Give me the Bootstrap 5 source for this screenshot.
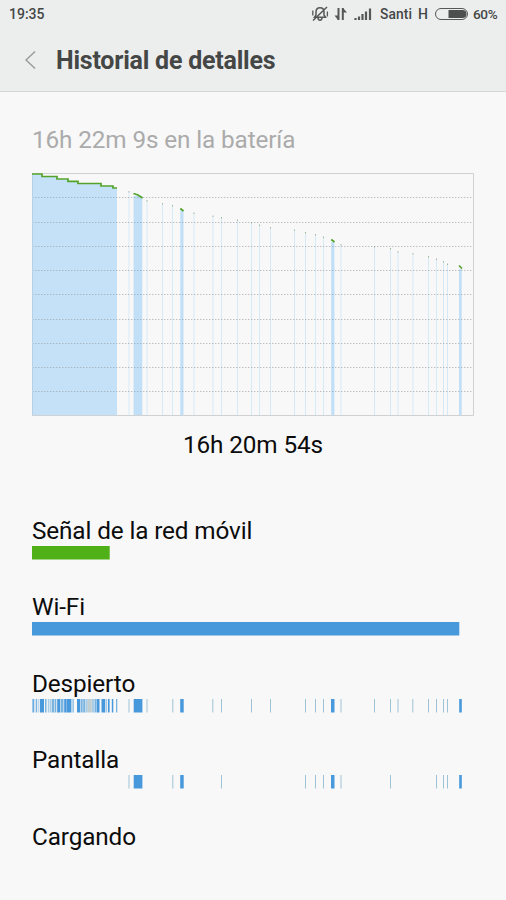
<!DOCTYPE html>
<html lang="es">
<head>
<meta charset="utf-8">
<meta name="viewport" content="width=device-width, initial-scale=1">
<title>Historial de detalles</title>
<link rel="stylesheet" href="https://cdn.jsdelivr.net/npm/bootstrap@5.3.0/dist/css/bootstrap.min.css">
<style>
body{font-family:Roboto,"Liberation Sans",sans-serif;background:#f8f8f8;color:#0c0c0c;overflow:hidden}
svg{display:block;flex:none}
.top-area{height:92px;background:#eceeee;border-bottom:1px solid #d5d7d7;color:#444746}
.status-row{height:28px;padding:0 9px;font-size:14px;font-weight:500;line-height:28px}
.status-row span{white-space:nowrap}
.carrier-name{width:38px;font-size:13.8px;letter-spacing:.1px}
.net-type{width:17px}
.battery-pct{width:24px;font-size:13.6px;letter-spacing:-.4px}
.title-row{height:64px;padding-left:24px}
.title-text{font-size:25px;font-weight:700;line-height:64px;letter-spacing:-.23px;margin:1px 0 0 19px;white-space:nowrap}
.content-area{padding:0 32px}
.line-text{font-size:24.3px;letter-spacing:-.12px;line-height:30px;white-space:nowrap;font-weight:400;margin:0}
.heading-gap{padding-top:33px;height:81px;color:#ababab}
.chart-label{margin-top:14px}
.first-block{margin-top:56px}
.hist-block{height:76.4px}
</style>
<script src="https://cdn.jsdelivr.net/npm/bootstrap@5.3.0/dist/js/bootstrap.bundle.min.js"></script>
</head>
<body>
<header class="top-area">
  <div class="status-row d-flex justify-content-between">
    <span>19:35</span>
    <div class="d-flex align-items-center">
      <svg width="72" height="28" viewBox="308 0 72 28" fill="none" stroke="#555857" stroke-width="1.5">
        <path d="M314.500 17.300h11l-1.500-2.300v-3q0-4.300-4-4.300t-4 4.300v3zM318 17.500q0 2.700 2 2.700t2-2.700M313 20.500 327 7"/>
        <path stroke-width="1.300" d="M312.800 10.500v5M327.400 11.500v5"/>
        <path stroke-width="2" d="M338.500 8v12M342.800 20V8"/>
        <path fill="#555857" stroke="none" d="M334.500 15.500h3.500V20zM343 8l4 4.500h-4z"/>
        <path stroke-width="2.200" d="M355.500 20v-2M359 20v-3.500M362.500 20v-6M366 20v-8.500M370 20V8.500"/>
      </svg>
      <span class="carrier-name">Santi</span><span class="net-type">H</span>
      <svg width="38" height="28" viewBox="435 0 38 28"><rect x="435.500" y="8.500" width="32" height="11" rx="5.500" fill="none" stroke="#555857"/><path d="M448.500 10h14a4 4 0 0 1 0 8h-14z" fill="#4c4f4e"/></svg>
      <span class="battery-pct">60%</span>
    </div>
  </div>
  <div class="title-row d-flex align-items-center">
    <svg width="13" height="20" viewBox="0 0 13 20" fill="none" stroke="#999" stroke-width="1.400"><path d="M11 1.500 2 10l9 8.500"/></svg>
    <h1 class="title-text">Historial de detalles</h1>
  </div>
</header>
<main class="content-area">
  <h2 class="line-text heading-gap">16h 22m 9s en la batería</h2>
  <svg id="chart" width="442" height="243" viewBox="32 173 442 243"></svg>
  <p class="line-text chart-label text-center">16h 20m 54s</p>
  <section class="hist-block first-block"><p class="line-text">Señal de la red móvil</p><svg id="signal" width="442" height="14" viewBox="32 0 442 14"></svg></section>
  <section class="hist-block"><p class="line-text">Wi-Fi</p><svg id="wifi" width="442" height="14" viewBox="32 0 442 14"></svg></section>
  <section class="hist-block"><p class="line-text">Despierto</p><svg id="awake" width="442" height="14" viewBox="32 0 442 14"></svg></section>
  <section class="hist-block"><p class="line-text">Pantalla</p><svg id="display" width="442" height="14" viewBox="32 0 442 14"></svg></section>
  <section class="hist-block"><p class="line-text">Cargando</p></section>
</main>
<script>
const rect = (x, y, w, h, c) => `<rect x="${x}" y="${y}" width="${w}" height="${h}" fill="${c}"/>`;
const fill = (id, s) => { document.getElementById(id).innerHTML = s; };

// Battery level: short samples as [x, top]
const samples = [[128.500,191],[146.500,200],[162,203],[172,205],[193.500,212.500],[212.500,215.500],[221,217],[237,219.500],[251,222],[259,224.500],[270,227],[294,229.500],[305,232],[315,234],[323,236.500],[340.500,244],[374,246],[390,248],[397.500,251],[412.500,253],[428,256],[436,258.500],[443,261],[447,263.500]];
const wide = [[133.500,196,8.800],[180.300,210,3.200],[331.200,242,3.200],[459,269,2.700]];
let s = '<path d="M32 416V174.500H42V177H57V179.500H68V182H78V184H101V186.500H113V188.500H117V416Z" fill="#c5e1f8"/>';
s += wide.map(([x, y, w]) => rect(x, y, w, 416 - y, '#c1dff6')).join('');
s += samples.map(([x, y]) => rect(x, y + 1, 1, 415 - y, '#d6e9f6') + rect(x, y, 1, 1.500, '#a3b99e')).join('');
for (let i = 1; i < 10; i++) {
  const y = Math.round(173 + i * 24.25) + .5;
  s += `<path d="M32 ${y}H473" stroke="#8f9a9f" stroke-opacity=".6" stroke-dasharray="1.400 1.600"/>`;
}
s += '<path d="M32 173.500H473.500V415.500H32" fill="none" stroke="#cfd2d3"/><path d="M32.500 174V415" stroke="#b7d0e3"/>';
s += '<path d="M32 174H42V176.500H57V179H68V181.300H78V183.500H101V186H113V188H117M133.500 193.500L138 195L142.500 198M180.300 208.500L183.500 211M331.200 239.500L334.500 242M459 265.500L462 268.500" fill="none" stroke="#53a32b" stroke-width="1.700"/>';
fill('chart', s);

fill('signal', rect(32, 0, 77.700, 13.500, '#50b018'));
fill('wifi', rect(32, 0, 427.300, 13.500, '#4898dc'));

const blocks = [[133.700,8.700],[180.200,3.500],[331,3.500],[459.200,2.600]];
const row = xs => xs.map(x => rect(x, 0, 1, 13.500, '#9dc3d8')).join('') + blocks.map(([x, w]) => rect(x, 0, w, 13.500, '#4898dc')).join('');

// Dense activity at the start of the period: [x, width, tone]
const tones = ['#4898dc', '#79b3e0', '#a9cde7', '#c1cfd2'];
const busy = [[32.500,1.300,0],[34.500,1,2],[36,1.200,1],[38.300,1,2],[40,4,0],[45,1.500,1],[47.800,1.500,2],[49.800,1.800,2],[52,2.300,1],[54.800,1.500,1],[57.200,2.800,0],[60.500,3,1],[64.200,2,0],[66.400,5,0],[72.500,1.200,1],[77,3.200,0],[80.700,2,1],[83.200,2,1],[85.500,2.300,2],[87.800,4,3],[92,2,2],[94.500,1.500,1],[96.500,3,0],[101.500,3.700,0],[105.700,1.500,2],[108,1.600,0],[111.800,1.500,0],[116,1.300,1]];
fill('awake', busy.map(([x, w, t]) => rect(x, 0, w, 13.500, tones[t])).join('') + row([128.500,146.500,172.300,212.300,221,251,270,305,315,323,340.500,374,390,397.500,412.300,428,436,443,447]));
fill('display', row([128.500,172.300,221,305,315,323,340.500,390,436,443,447]));
</script>
</body>
</html>
